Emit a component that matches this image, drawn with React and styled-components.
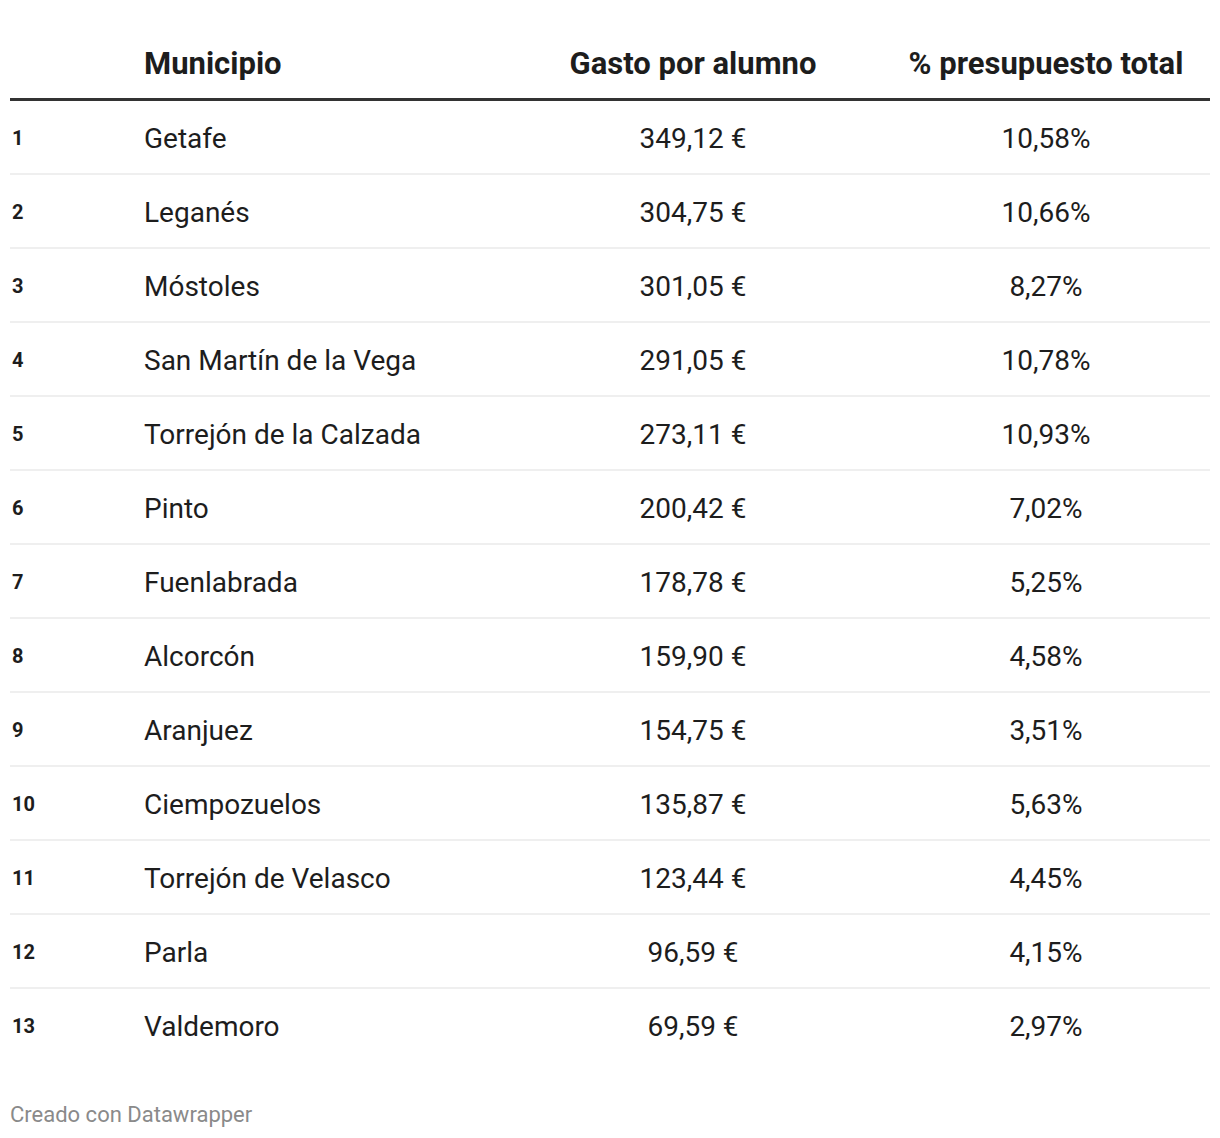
import React from 'react';
import styled, { createGlobalStyle } from 'styled-components';

const GlobalStyle = createGlobalStyle`
  body {
    margin: 0;
    background: #ffffff;
    font-family: Roboto, 'Liberation Sans', sans-serif;
    color: #1d1d1d;
  }
`;

const Wrapper = styled.div`
  padding: 0 10px;
`;

const Table = styled.div`
  display: grid;
  grid-template-columns: 134px 360px 378px 328px;
`;

const HeadCell = styled.div`
  padding: 47px 0 17px;
  border-bottom: 3px solid #333333;
  font-size: 31px;
  line-height: 34px;
  font-weight: 700;
  color: #1d1d1d;
  text-align: ${(p) => p.$align || 'left'};
  white-space: nowrap;
`;

const Cell = styled.div`
  box-sizing: border-box;
  height: 74px;
  padding-top: 2px;
  display: flex;
  align-items: center;
  justify-content: ${(p) => (p.$align === 'center' ? 'center' : 'flex-start')};
  border-bottom: 2px solid ${(p) => (p.$last ? 'transparent' : '#efefef')};
  font-size: 28px;
  color: #1d1d1d;
  white-space: nowrap;
`;

const Rank = styled(Cell)`
  padding-left: 2px;
  font-size: 20px;
  font-weight: 700;
`;

const Footer = styled.div`
  margin-top: 39px;
  font-size: 22px;
  color: #8a8a8a;
  line-height: 26px;
`;

const rows = [
  ['Getafe', '349,12 €', '10,58%'],
  ['Leganés', '304,75 €', '10,66%'],
  ['Móstoles', '301,05 €', '8,27%'],
  ['San Martín de la Vega', '291,05 €', '10,78%'],
  ['Torrejón de la Calzada', '273,11 €', '10,93%'],
  ['Pinto', '200,42 €', '7,02%'],
  ['Fuenlabrada', '178,78 €', '5,25%'],
  ['Alcorcón', '159,90 €', '4,58%'],
  ['Aranjuez', '154,75 €', '3,51%'],
  ['Ciempozuelos', '135,87 €', '5,63%'],
  ['Torrejón de Velasco', '123,44 €', '4,45%'],
  ['Parla', '96,59 €', '4,15%'],
  ['Valdemoro', '69,59 €', '2,97%'],
];

export default function App() {
  return (
    <Wrapper>
      <GlobalStyle />
      <Table>
        <HeadCell />
        <HeadCell>Municipio</HeadCell>
        <HeadCell $align="center">Gasto por alumno</HeadCell>
        <HeadCell $align="center">% presupuesto total</HeadCell>
        {rows.map(([name, gasto, pct], i) => {
          const last = i === rows.length - 1;
          return (
            <React.Fragment key={name}>
              <Rank $last={last}>{i + 1}</Rank>
              <Cell $last={last}>{name}</Cell>
              <Cell $align="center" $last={last}>{gasto}</Cell>
              <Cell $align="center" $last={last}>{pct}</Cell>
            </React.Fragment>
          );
        })}
      </Table>
      <Footer>Creado con Datawrapper</Footer>
    </Wrapper>
  );
}
